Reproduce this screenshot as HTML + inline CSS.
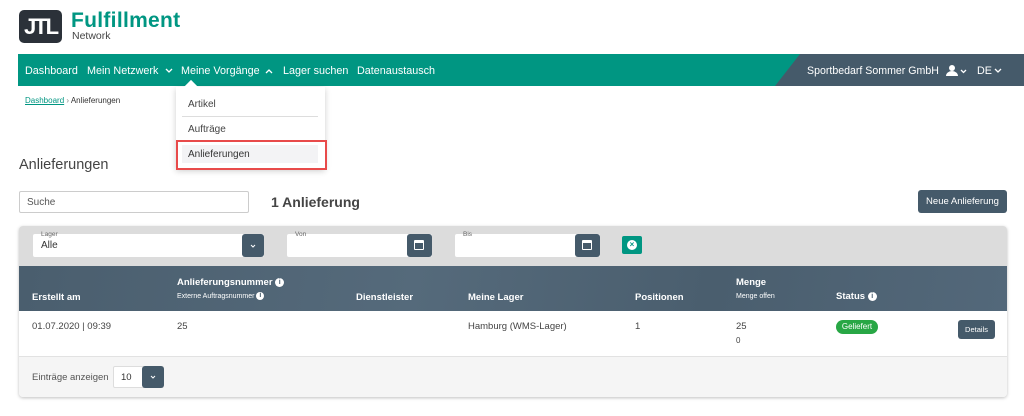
<!DOCTYPE html>
<html><head><meta charset="utf-8"><style>
*{box-sizing:border-box;margin:0;padding:0}
body{width:1024px;height:416px;background:#fff;font-family:"Liberation Sans",sans-serif;color:#333;position:relative;overflow:hidden}
.a{position:absolute}
.nav{left:18px;top:54px;width:1006px;height:32px;background:#009682}
.nav span{position:absolute;top:11px;color:#fff;font-size:10.8px}
.nav svg{position:absolute;top:14px}
.dark{left:775px;top:54px;width:249px;height:32px;background:#455a6a;clip-path:polygon(25px 0,100% 0,100% 100%,0 100%)}
.hd{color:#fff;font-weight:bold;font-size:9.5px}
.btn{background:#455a6a;border-radius:3px}
.info{display:inline-block;width:9px;height:9px;border-radius:50%;background:#fff;color:#455a6a;font-size:7px;line-height:9px;text-align:center;font-weight:bold;vertical-align:middle}
.inp{background:#fff;border-radius:2px}
.cal{width:10px;height:10px;border:1.5px solid #fff;border-top-width:3px;border-radius:1px}
</style></head><body>
<div class="a" style="left:19px;top:10px;width:43px;height:33px;background:#2b3139;border-radius:5px;color:#fff;font-weight:bold;font-size:22px;line-height:33px;text-align:center;letter-spacing:-2px">JTL</div>
<div class="a" style="left:71px;top:9px;font-size:21px;font-weight:bold;color:#009682;letter-spacing:0.3px">Fulfillment</div>
<div class="a" style="left:72px;top:30px;font-size:10.5px;color:#444">Network</div>
<div class="a nav">
<span style="left:7px">Dashboard</span>
<span style="left:69px">Mein Netzwerk</span>
<svg style="left:147px" width="8" height="6"><path d="M1 1l3 3 3-3" stroke="#fff" fill="none" stroke-width="1.3"/></svg>
<span style="left:163px">Meine Vorgänge</span>
<svg style="left:247px" width="8" height="6"><path d="M1 5l3-3 3 3" stroke="#fff" fill="none" stroke-width="1.3"/></svg>
<span style="left:265px">Lager suchen</span>
<span style="left:339px">Datenaustausch</span>
</div>
<div class="a dark"></div>
<div class="a" style="left:807px;top:65px;color:#fff;font-size:10.6px">Sportbedarf Sommer GmbH</div>
<svg class="a" style="left:946px;top:65px" width="22" height="12"><circle cx="6" cy="3" r="3" fill="#fff"/><path d="M0 11a6 5 0 0 1 12 0z" fill="#fff"/><path d="M15 5l2.5 2.5L20 5" stroke="#fff" fill="none" stroke-width="1.3"/></svg>
<div class="a" style="left:977px;top:65px;color:#fff;font-size:10.8px">DE</div>
<svg class="a" style="left:994px;top:68px" width="8" height="6"><path d="M1 1l3 3 3-3" stroke="#fff" fill="none" stroke-width="1.3"/></svg>
<div class="a" style="left:25px;top:96px;font-size:8px"><span style="color:#009682;text-decoration:underline">Dashboard</span> <span style="color:#888">›</span> Anlieferungen</div>
<div class="a" style="left:176px;top:87px;width:149px;height:82px;background:#fff;box-shadow:0 2px 6px rgba(0,0,0,.2)"></div>
<div class="a" style="left:186px;top:82px;width:10px;height:10px;background:#fff;transform:rotate(45deg)"></div>
<div class="a" style="left:188px;top:99px;font-size:10px;color:#444">Artikel</div>
<div class="a" style="left:182px;top:116px;width:136px;height:1px;background:#ddd"></div>
<div class="a" style="left:188px;top:124px;font-size:10px;color:#444">Aufträge</div>
<div class="a" style="left:182px;top:145px;width:136px;height:18px;background:#f3f3f5"></div>
<div class="a" style="left:188px;top:149px;font-size:10px;color:#333">Anlieferungen</div>
<div class="a" style="left:176px;top:140px;width:151px;height:30px;border:2px solid #e84a4a"></div>
<div class="a" style="left:19px;top:157px;font-size:14.5px;color:#444">Anlieferungen</div>
<div class="a" style="left:19px;top:191px;width:230px;height:22px;border:1px solid #ccc;border-radius:2px;font-size:10px;padding:5px 7px;color:#555">Suche</div>
<div class="a" style="left:271px;top:194px;font-size:14px;font-weight:bold;color:#444">1 Anlieferung</div>
<div class="a btn" style="left:918px;top:190px;width:89px;height:23px;color:#fff;font-size:9.5px;line-height:23px;text-align:center">Neue Anlieferung</div>
<div class="a" style="left:19px;top:226px;width:988px;height:171px;border-radius:4px;box-shadow:0 1px 3px rgba(0,0,0,.25);overflow:hidden">
<div class="a" style="left:0;top:0;width:988px;height:40px;background:#dcdcdc"></div>
<div class="a inp" style="left:14px;top:8px;width:231px;height:23px"></div>
<div class="a" style="left:22px;top:5px;font-size:6.5px;color:#666">Lager</div>
<div class="a" style="left:22px;top:14px;font-size:10px;color:#333">Alle</div>
<div class="a btn" style="left:223px;top:8px;width:22px;height:23px"><svg width="22" height="23"><path d="M9 11l2 2 2-2" stroke="#fff" fill="none"/></svg></div>
<div class="a inp" style="left:268px;top:8px;width:145px;height:23px"></div>
<div class="a" style="left:276px;top:5px;font-size:6.5px;color:#666">Von</div>
<div class="a btn" style="left:388px;top:8px;width:25px;height:23px"><div class="a cal" style="left:7px;top:6px"></div></div>
<div class="a inp" style="left:436px;top:8px;width:145px;height:23px"></div>
<div class="a" style="left:444px;top:5px;font-size:6.5px;color:#666">Bis</div>
<div class="a btn" style="left:556px;top:8px;width:25px;height:23px"><div class="a cal" style="left:7px;top:6px"></div></div>
<div class="a" style="left:603px;top:10px;width:20px;height:18px;background:#009682;border-radius:2px"><div class="a" style="left:5px;top:4px;width:10px;height:10px;border-radius:50%;background:#fff;color:#009682;font-size:8px;line-height:10px;text-align:center;font-weight:bold">×</div></div>
<div class="a" style="left:0;top:40px;width:988px;height:45px;background:linear-gradient(100deg,#4a5e6e,#556a7b 40%,#4a5e6e 70%,#53687a)"></div>
<div class="a hd" style="left:13px;top:66px">Erstellt am</div>
<div class="a hd" style="left:158px;top:51px">Anlieferungsnummer <span class="info">i</span></div>
<div class="a" style="left:158px;top:66px;color:#fff;font-size:7px">Externe Auftragsnummer <span class="info" style="width:8px;height:8px;line-height:8px">i</span></div>
<div class="a hd" style="left:337px;top:66px">Dienstleister</div>
<div class="a hd" style="left:449px;top:66px">Meine Lager</div>
<div class="a hd" style="left:616px;top:66px">Positionen</div>
<div class="a hd" style="left:717px;top:51px">Menge</div>
<div class="a" style="left:717px;top:67px;color:#fff;font-size:7px">Menge offen</div>
<div class="a hd" style="left:817px;top:65px">Status <span class="info">i</span></div>
<div class="a" style="left:0;top:85px;width:988px;height:46px;background:#fff;border-bottom:1px solid #e2e2e2;font-size:9.5px;color:#444">
<div class="a" style="left:13px;top:10px">01.07.2020 | 09:39</div>
<div class="a" style="left:158px;top:10px">25</div>
<div class="a" style="left:449px;top:10px">Hamburg (WMS-Lager)</div>
<div class="a" style="left:616px;top:10px">1</div>
<div class="a" style="left:717px;top:10px">25</div>
<div class="a" style="left:717px;top:25px;font-size:8px">0</div>
<div class="a" style="left:817px;top:9px;width:42px;height:14px;background:#28a745;border-radius:7px;color:#fff;font-size:8px;line-height:14px;text-align:center">Geliefert</div>
<div class="a btn" style="left:939px;top:9px;width:37px;height:19px;color:#fff;font-size:7.5px;line-height:19px;text-align:center">Details</div>
</div>
<div class="a" style="left:0;top:131px;width:988px;height:40px;background:#f5f5f5"></div>
<div class="a" style="left:13px;top:146px;font-size:9.5px;color:#555">Einträge anzeigen</div>
<div class="a inp" style="left:94px;top:140px;width:51px;height:22px;border:1px solid #ddd"></div>
<div class="a" style="left:102px;top:146px;font-size:9.5px">10</div>
<div class="a btn" style="left:123px;top:140px;width:22px;height:22px"><svg width="22" height="22"><path d="M9 10l2 2 2-2" stroke="#fff" fill="none"/></svg></div>
</div>
</body></html>
